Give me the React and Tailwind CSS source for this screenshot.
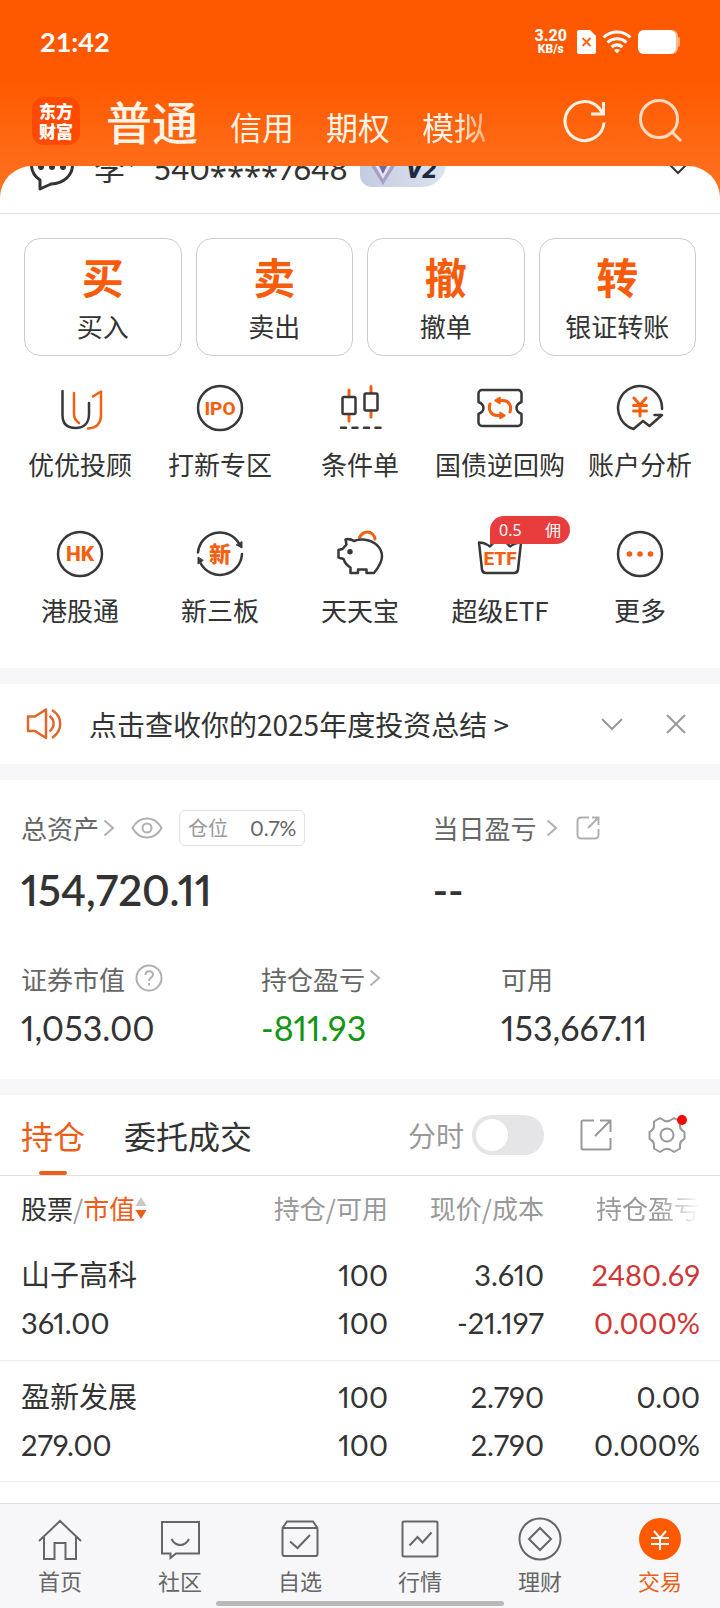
import React, { useState } from "react";

const tradeActions = [
  { glyph: "买", label: "买入" },
  { glyph: "卖", label: "卖出" },
  { glyph: "撤", label: "撤单" },
  { glyph: "转", label: "银证转账" },
];

const holdings = [
  {
    name: "山子高科",
    value: "361.00",
    total: "100",
    usable: "100",
    price: "3.610",
    cost: "-21.197",
    profit: "2480.69",
    rate: "0.000%",
    up: true,
  },
  {
    name: "盈新发展",
    value: "279.00",
    total: "100",
    usable: "100",
    price: "2.790",
    cost: "2.790",
    profit: "0.00",
    rate: "0.000%",
    up: false,
  },
];

const NUM = "font-['Lato','Noto_Sans_CJK_SC',sans-serif] proportional-nums";

function ServiceIcon({ children }) {
  return (
    <svg
      viewBox="0 0 48 48"
      className="size-12 fill-none stroke-[#383838] stroke-[2.5]"
      strokeLinecap="round"
      strokeLinejoin="round"
      aria-hidden="true"
    >
      {children}
    </svg>
  );
}

function IconWord({ size, y, children }) {
  return (
    <text
      x="24"
      y={y}
      fontSize={size}
      textAnchor="middle"
      stroke="none"
      className="fill-[#f55f10] font-['Roboto','Noto_Sans_CJK_SC',sans-serif] font-extrabold"
    >
      {children}
    </text>
  );
}

const services = [
  {
    label: "优优投顾",
    icon: (
      <ServiceIcon>
        <path d="M6.500 7v24c0 9 4.500 13 13 13s13.500-5 13.500-14V19" />
        <path d="M18 9v21c0 4 2 7 5 9M37 12.500l8-5v23c0 9-4 13.500-13 14" className="stroke-[#f55f10]" />
      </ServiceIcon>
    ),
  },
  {
    label: "打新专区",
    icon: (
      <ServiceIcon>
        <circle cx="24" cy="24" r="22" />
        <IconWord size={19} y={31}>IPO</IconWord>
      </ServiceIcon>
    ),
  },
  {
    label: "条件单",
    icon: (
      <ServiceIcon>
        <path d="M13 6v6M13 31v6M35 2.500v6M35 27v6" className="stroke-[#f55f10] stroke-[3]" />
        <rect x="6.500" y="13" width="13" height="17" rx="1.500" />
        <rect x="28.500" y="9.500" width="13" height="17" rx="1.500" />
        <path d="M5 43.700h5M16.500 43.700h5M28 43.700h5M39.500 43.700h5" />
      </ServiceIcon>
    ),
  },
  {
    label: "国债逆回购",
    icon: (
      <ServiceIcon>
        <path d="M6 6h36a3.500 3.500 0 0 1 3.500 3.500V18c-3.500 1.500-5 3.500-5 6s1.500 4.500 5 6v8.500A3.500 3.500 0 0 1 42 42H6a3.500 3.500 0 0 1-3.500-3.500V30c3.500-1.500 5-3.500 5-6s-1.500-4.500-5-6V9.500A3.500 3.500 0 0 1 6 6z" />
        <g className="stroke-[#f55f10] stroke-[3]">
          <path d="M34 28c2-6-1-11.500-7-11.500h-3M14 20c-2 6 1 11.500 7 11.500h3" />
          <path d="M24 13.500v6l-5-3zM24 28.500v6l5-3z" className="fill-[#f55f10] stroke-[1.5]" />
        </g>
      </ServiceIcon>
    ),
  },
  {
    label: "账户分析",
    icon: (
      <ServiceIcon>
        <path d="M46 25A22 22 0 1 0 17.500 45l9.500-8 6.500 5L46 31h-7.500" />
        <path d="M18 14l6 7 6-7M24 21v11M17.500 21.500h13M17.500 27h13" className="stroke-[#f55f10] stroke-[3]" />
      </ServiceIcon>
    ),
  },
  {
    label: "港股通",
    icon: (
      <ServiceIcon>
        <circle cx="24" cy="24" r="22" />
        <IconWord size={21} y={31}>HK</IconWord>
      </ServiceIcon>
    ),
  },
  {
    label: "新三板",
    icon: (
      <ServiceIcon>
        <path d="M2 22.500A22 22 0 0 1 43 13.500M46 24A22 22 0 0 1 4.500 33" />
        <path d="M46 12v6l-5.500-3zM2 27.500v6.500l5-3.500z" className="fill-[#383838] stroke-1" />
        <IconWord size={22} y={32}>新</IconWord>
      </ServiceIcon>
    ),
  },
  {
    label: "天天宝",
    icon: (
      <ServiceIcon>
        <path d="M23.500 7.500c2-4 4.500-5.500 8-5.500s7 3 7.500 7" className="stroke-[#f55f10] stroke-[3]" />
        <path d="M9.500 9.500c3-.8 6-.2 8.500 1.500 3-1.200 7-1.700 11-1.200C39 11 46 18 46 26.500c0 6-4 11.500-8 16.500h-7.500v-3.500H22V43h-7.500v-5.500C11.500 36 9 33 7.500 29L2.500 27.500v-7.500l4-1 4-4.500z" />
        <circle cx="14" cy="21.700" r="1.500" className="fill-[#383838]" />
      </ServiceIcon>
    ),
  },
  {
    label: "超级ETF",
    badge: ["0.5", "佣"],
    icon: (
      <ServiceIcon>
        <path d="M3 12.500c4 0 7 1 11 4L24 6l10 10.500c4-3 7-4 11-4l-3 27a4 4 0 0 1-4 3.500H10a4 4 0 0 1-4-3.500z" />
        <IconWord size={19} y={35}>ETF</IconWord>
      </ServiceIcon>
    ),
  },
  {
    label: "更多",
    icon: (
      <ServiceIcon>
        <circle cx="24" cy="24" r="22" />
        <g className="fill-[#f55f10] stroke-none">
          <circle cx="13.500" cy="24" r="2.800" />
          <circle cx="24" cy="24" r="2.800" />
          <circle cx="34.500" cy="24" r="2.800" />
        </g>
      </ServiceIcon>
    ),
  },
];

const tabs = [
  { label: "首页", icon: <path d="M1 24L22 4l21 20M6 20v22h10.500V26h11v16H38V20" /> },
  {
    label: "社区",
    icon: <path d="M4 5h37v31.500H18L12.500 41v-4.500H4zM13.500 22c4 8 13.500 8 17.500 0" />,
  },
  {
    label: "自选",
    icon: (
      <path d="M4.500 11l4.500-6.500h26l4.500 6.500v26a2 2 0 0 1-2 2h-31a2 2 0 0 1-2-2zM4.500 11h35M12 24.500l7.500 6.500L32 18" />
    ),
  },
  {
    label: "行情",
    icon: (
      <>
        <rect x="4.500" y="4.500" width="35" height="35" rx="1.500" />
        <path d="M11.500 28.500l8-8.500 5 5.500 9-10" />
      </>
    ),
  },
  {
    label: "理财",
    icon: (
      <>
        <circle cx="22" cy="22" r="20.500" />
        <path d="M22 11l11 11-11 11-11-11z" />
      </>
    ),
  },
  {
    label: "交易",
    active: true,
    icon: (
      <>
        <circle cx="22" cy="22" r="21" className="fill-[#ff5a00] stroke-none" />
        <path d="M16 14l6 7 6-7M22 21v12M13 21h18M13 27h18" className="stroke-white" />
      </>
    ),
  },
];

function ChevronRight() {
  return (
    <svg viewBox="0 0 12 18" className="h-[18px] w-3 fill-none stroke-[#b0b0b0] stroke-2" aria-hidden="true">
      <path d="M1.500 1.500L10 9l-8.500 7.500" />
    </svg>
  );
}

function StatusBar() {
  return (
    <div className="flex h-[84px] items-center justify-between px-10 text-white">
      <span className="font-['Lato',sans-serif] text-[27px] leading-8 font-bold">21:42</span>
      <div className="flex items-center gap-[6px]">
        <div className="mr-1 text-center font-['Roboto',sans-serif] font-extrabold">
          <div className="text-base leading-[15px]">3.20</div>
          <div className="text-xs leading-[13px]">KB/s</div>
        </div>
        <svg viewBox="0 0 19 24" className="h-6 w-[19px]" aria-hidden="true">
          <path d="M2 0h11l6 6v16a2 2 0 0 1-2 2H2a2 2 0 0 1-2-2V2a2 2 0 0 1 2-2z" fill="#fff" />
          <path d="M5.500 8l8 8M13.500 8l-8 8" stroke="#f26a1c" strokeWidth="2" />
        </svg>
        <svg viewBox="0 0 30 24" className="h-6 w-[30px] fill-none stroke-white stroke-[3]" aria-hidden="true">
          <path d="M1.500 7.500c8-7.300 19-7.300 27 0M5.500 12.500c5.500-5 13.500-5 19 0M9.500 17c3.500-2.700 7.500-2.700 11 0" />
          <path d="M12 20c2-1.300 4-1.300 6 0l-3 3.500z" className="fill-white stroke-none" />
        </svg>
        <svg viewBox="0 0 42 24" className="h-6 w-[42px]" aria-hidden="true">
          <path d="M38 7h2a2 2 0 0 1 2 2v6a2 2 0 0 1-2 2h-2z" fill="#ffa878" />
          <rect width="40" height="24" rx="6" fill="#ffb68c" />
          <rect width="38" height="24" rx="6" fill="#fff" />
        </svg>
      </div>
    </div>
  );
}

function AccountTabs() {
  return (
    <div className="flex h-[82px] items-center pr-[37px] pb-2 pl-8 text-[#fff3e6]">
      <div className="flex size-12 shrink-0 flex-col items-center justify-center rounded-xl bg-[#ff4a00] text-[17px] leading-5 font-black text-white">
        <span>东方</span>
        <span>财富</span>
      </div>
      <nav className="ml-[26px] flex flex-1 items-baseline gap-8">
        <button className="text-[46px] leading-[54px] font-[450]">普通</button>
        <button className="text-[32px]">信用</button>
        <button className="text-[32px]">期权</button>
        <button className="[mask-image:linear-gradient(to_right,black_50%,#0008)] text-[32px]">模拟</button>
      </nav>
      <div className="flex gap-[30px]">
        <button aria-label="刷新">
          <svg viewBox="0 0 46 46" className="size-[46px] fill-none stroke-current stroke-[3]">
            <path d="M43 24.500A19.500 19.500 0 1 1 38 10l4 6M30 16h12.500V4" />
          </svg>
        </button>
        <button aria-label="搜索">
          <svg viewBox="0 0 46 46" className="size-[46px] fill-none stroke-[#ffdcc0] stroke-[3]">
            <circle cx="22" cy="21" r="18.500" />
            <path d="M35 34l9 9" />
          </svg>
        </button>
      </div>
    </div>
  );
}

// Account row sits scrolled half way under the header
function AccountRow() {
  return (
    <div className="flex h-12 items-end overflow-hidden border-b border-[#e2e2e2]">
      <div className="flex h-[88px] w-full shrink-0 items-center pr-8 pl-[30px] text-[#333]">
        <svg viewBox="0 0 44 44" className="size-11 fill-none stroke-[#333] stroke-[3]" aria-hidden="true">
          <path d="M10 33C4 29 1.500 24 1.500 18 1.500 8 10 0 22 0s20.500 8 20.500 18S34 36.500 21 37l-11 5z" strokeLinejoin="round" />
          <g className="fill-[#333] stroke-none">
            <circle cx="11" cy="20" r="3" />
            <circle cx="22" cy="20" r="3" />
            <circle cx="33" cy="20" r="3" />
          </g>
        </svg>
        <span className={`ml-5 text-[31px] leading-[44px] whitespace-pre ${NUM}`}>
          李*{"  "}540<span className="align-sub font-['Noto_Sans',sans-serif] leading-none">****</span>7648
        </span>
        <span className="ml-3 flex h-9 w-[86px] items-center gap-2 rounded-tl-xl rounded-br-[24px] rounded-bl-xl bg-linear-to-r from-[#c3cbe0] to-[#dce3f0] pl-2">
          <svg viewBox="0 0 30 32" className="h-8 w-[30px]" aria-hidden="true">
            <path d="M0 8L8 0h14l8 8-15 24z" fill="#a79fc4" />
            <path d="M5 9h20L15 26z" fill="#e4e2f3" />
            <path d="M9 9h12l-6 12z" fill="#6f6c9c" />
          </svg>
          <span className="font-['Roboto',sans-serif] text-[26px] font-black text-[#1f2942] italic">V2</span>
        </span>
        <svg viewBox="0 0 20 12" className="ml-auto h-3 w-5 fill-none stroke-[#333] stroke-2" aria-hidden="true">
          <path d="M1 1l9 9 9-9" />
        </svg>
      </div>
    </div>
  );
}

function AssetSummary() {
  return (
    <section className="h-[299px] pt-7 text-[#666]">
      <div className="grid grid-cols-[4fr_3fr] *:pl-[21px]">
        <div>
          <div className="flex h-10 items-center text-[26px] leading-10">
            总资产
            <span className="ml-1">
              <ChevronRight />
            </span>
            <button className="ml-4" aria-label="隐藏金额">
              <svg viewBox="0 0 32 22" className="h-[22px] w-8 fill-none stroke-[#b0b0b0] stroke-2">
                <path d="M1.500 11C5 4.500 10 1.500 16 1.500S27 4.500 30.500 11C27 17.500 22 20.500 16 20.500S5 17.500 1.500 11z" />
                <circle cx="16" cy="11" r="4.500" />
              </svg>
            </button>
            <span className="ml-4 flex h-9 items-center gap-[22px] rounded-md border border-[#e2e2e2] px-2 text-xl text-[#999]">
              仓位 <span className={`text-[21px] text-[#666] ${NUM}`}>0.7%</span>
            </span>
          </div>
          <div className={`mt-4 text-[42px] leading-[52px] font-semibold text-[#333] ${NUM}`}>154,720.11</div>
        </div>
        <div>
          <div className="flex h-10 items-center text-[26px] leading-10">
            当日盈亏
            <span className="ml-[10px]">
              <ChevronRight />
            </span>
            <button className="ml-[18px]" aria-label="分享当日盈亏">
              <svg viewBox="0 0 24 24" className="size-6 fill-none stroke-[#b0b0b0] stroke-2">
                <path d="M13 1.500H5A3.500 3.500 0 0 0 1.500 5v14A3.500 3.500 0 0 0 5 22.500h14a3.500 3.500 0 0 0 3.500-3.500v-6M12 12L22.500 1.500M16 1.500h6.500V9" />
              </svg>
            </button>
          </div>
          <div className={`mt-4 text-[42px] leading-[52px] font-semibold text-[#333] ${NUM}`}>--</div>
        </div>
      </div>

      <div className="mt-[42px] grid grid-cols-3 *:pl-[21px]">
        <div>
          <div className="flex h-10 items-center gap-[10px] text-[26px]">
            证券市值
            <svg viewBox="0 0 28 28" className="size-7 fill-none stroke-[#b0b0b0] stroke-2" aria-hidden="true">
              <circle cx="14" cy="14" r="12.500" />
              <path d="M10.500 11c0-5 7.500-5 7.500-.5 0 3-4 3-4 6.500M14 19v2.500" />
            </svg>
          </div>
          <div className={`mt-[10px] text-[34px] leading-10 text-[#333] ${NUM}`}>1,053.00</div>
        </div>
        <div>
          <div className="flex h-10 items-center gap-1 text-[26px]">
            持仓盈亏
            <ChevronRight />
          </div>
          <div className={`mt-[10px] text-[34px] leading-10 text-[#149614] ${NUM}`}>-811.93</div>
        </div>
        <div>
          <div className="flex h-10 items-center text-[26px]">可用</div>
          <div className={`mt-[10px] text-[34px] leading-10 text-[#333] ${NUM}`}>153,667.11</div>
        </div>
      </div>
    </section>
  );
}

function Holdings() {
  const [intraday, setIntraday] = useState(false);

  return (
    <section>
      <div className="flex h-[81px] items-center border-b border-[#e0e0e0] pr-5 pl-[21px]">
        <button className="relative h-20 text-[32px] text-[#ea5e17] after:absolute after:bottom-0 after:left-1/2 after:h-1 after:w-7 after:-translate-x-1/2 after:rounded-full after:bg-[#ea5e17]">
          持仓
        </button>
        <button className="ml-[39px] h-20 text-[32px] text-[#333]">委托成交</button>
        <label className="ml-auto flex items-center gap-2 text-[28px] text-[#999]">
          分时
          <input
            type="checkbox"
            checked={intraday}
            onChange={(e) => setIntraday(e.target.checked)}
            className="flex h-10 w-[72px] appearance-none items-center rounded-full bg-[#e5e5e7] px-1 before:size-8 before:rounded-full before:bg-white checked:justify-end checked:bg-[#ea5e17]"
          />
        </label>
        <button className="ml-9" aria-label="分享持仓">
          <svg viewBox="0 0 32 32" className="size-8 fill-none stroke-[#999] stroke-2">
            <path d="M14 1.500H3A1.500 1.500 0 0 0 1.500 3v26A1.500 1.500 0 0 0 3 30.500h26a1.500 1.500 0 0 0 1.500-1.500V19M15 17L30 2M20 1.500h10.500V13" />
          </svg>
        </button>
        <button className="relative mr-[14px] ml-9" aria-label="持仓设置">
          <svg viewBox="0 0 38 38" className="size-[38px] fill-none stroke-[#999] stroke-2" strokeLinejoin="round">
            <path d="M12 2l4 2.500c2 1 4 1 6 0L26 2l6 3.500v4.500c0 2.500 1 4 3 5l1.500 1v6.500L35 24c-2 1-3 2.500-3 5v3.500L26 36l-4-2.500c-2-1-4-1-6 0L12 36l-6-3.500V29c0-2.500-1-4-3-5l-1.500-1.500V16L3 15c2-1 3-2.500 3-5V5.500z" />
            <circle cx="19" cy="19" r="6.500" />
          </svg>
          <span className="absolute -top-px -right-px size-[10px] rounded-full bg-[#fa0505]" />
        </button>
      </div>

      <table className="w-full table-fixed text-right text-[29px] leading-[48px] text-[#333]">
        <thead className="text-[26px] text-[#999]">
          <tr className="h-[63px] *:p-0 *:font-normal">
            <th>
              <button className="ml-[21px] flex items-center">
                <span className="text-[#333]">股票</span>/<span className="text-[#ea5e17]">市值</span>
                <svg viewBox="0 0 12 24" className="h-6 w-3" aria-hidden="true">
                  <path d="M6 1l5.500 9H.500z" fill="#c8c8c8" />
                  <path d="M6 23l5.500-9H.500z" fill="#ea5e17" />
                </svg>
              </button>
            </th>
            <th className="w-[156px]">持仓/可用</th>
            <th className="w-[156px]">现价/成本</th>
            <th className="w-44">
              <span className="mr-5 [mask-image:linear-gradient(to_right,black_60%,transparent)]">持仓盈亏</span>
            </th>
          </tr>
        </thead>
        <tbody className={NUM}>
          {holdings.map((h) => (
            <tr key={h.name} className="h-[121px] border-b border-[#ececec]">
              <td className="p-0 pl-[21px] text-left">
                <div>{h.name}</div>
                <div>{h.value}</div>
              </td>
              <td className="p-0">
                <div>{h.total}</div>
                <div>{h.usable}</div>
              </td>
              <td className="p-0">
                <div>{h.price}</div>
                <div>{h.cost}</div>
              </td>
              <td className={h.up ? "p-0 pr-5 text-[#cf3636]" : "p-0 pr-5"}>
                <div>{h.profit}</div>
                <div>{h.rate}</div>
              </td>
            </tr>
          ))}
        </tbody>
      </table>
    </section>
  );
}

function BottomNav() {
  return (
    <nav className="sticky bottom-0 grid h-[105px] grid-cols-6 border-t border-[#e0e0e0] bg-[#f7f7fa] pt-[13px]">
      {tabs.map((t) => (
        <a
          key={t.label}
          href="#"
          className={`flex flex-col items-center gap-[3px] text-[22px] leading-8 ${
            t.active ? "text-[#ea5e17]" : "text-[#666]"
          }`}
        >
          <svg viewBox="0 0 44 44" className="size-11 fill-none stroke-[#666] stroke-2" aria-hidden="true">
            {t.icon}
          </svg>
          {t.label}
        </a>
      ))}
      <span className="absolute bottom-[2px] left-1/2 h-[5px] w-2/5 -translate-x-1/2 rounded-full bg-[#b9b9b9]" />
    </nav>
  );
}

export default function App() {
  const [noticeOpen, setNoticeOpen] = useState(true);

  return (
    <div className="flex min-h-screen flex-col bg-[linear-gradient(#ff5900_80px,#ff701d_180px)] font-['Noto_Sans_CJK_SC',sans-serif]">
      <header>
        <StatusBar />
        <AccountTabs />
      </header>

      <main className="flex-1 overflow-hidden rounded-t-[32px] bg-white">
        <AccountRow />

        <section className="h-[454px] pt-6 text-[26px] leading-9 text-[#333]">
          <div className="grid grid-cols-4 gap-[14px] px-6">
            {tradeActions.map((a) => (
              <button
                key={a.label}
                className="flex h-[118px] flex-col items-center justify-center gap-1 rounded-2xl border border-[#ccc] pb-[3px]"
              >
                <span className="text-[42px] leading-[56px] font-bold text-[#f85c0a]">{a.glyph}</span>
                <span>{a.label}</span>
              </button>
            ))}
          </div>

          <div className="mt-7 grid grid-cols-5 gap-y-12 px-[10px]">
            {services.map((s) => (
              <button key={s.label} className="relative flex flex-col items-center gap-[14px] whitespace-nowrap">
                {s.icon}
                <span>{s.label}</span>
                {s.badge && (
                  <span className="absolute -top-[14px] left-[60px] flex h-7 w-20 items-center justify-between rounded-full rounded-bl-none bg-[#e83c3d] px-[9px] font-['Noto_Sans','Noto_Sans_CJK_SC',sans-serif] text-base text-white">
                    <span>{s.badge[0]}</span>
                    <span>{s.badge[1]}</span>
                  </span>
                )}
              </button>
            ))}
          </div>
        </section>

        {noticeOpen && (
          <div className="flex h-24 items-center border-t-16 border-[#f7f7fa] pr-8 pl-[26px]">
            <svg
              viewBox="0 0 36 36"
              className="size-9 shrink-0 fill-none stroke-[#e0662a] stroke-[2.5]"
              strokeLinejoin="round"
              aria-hidden="true"
            >
              <path d="M2 10.500h7L20 3.500v28.500l-11-7H2zM23.500 10c5.500 4 5.500 11 0 15.500M26 4c11 7 11 20.500 0 28" />
            </svg>
            <a href="#" className="ml-[27px] flex-1 text-[28px] text-[#333]">
              点击查收你的2025年度投资总结 &gt;
            </a>
            <button aria-label="展开">
              <svg viewBox="0 0 24 24" className="size-6 fill-none stroke-[#999] stroke-2">
                <path d="M2 7l10 10L22 7" />
              </svg>
            </button>
            <button className="ml-10" aria-label="关闭" onClick={() => setNoticeOpen(false)}>
              <svg viewBox="0 0 24 24" className="size-6 fill-none stroke-[#999] stroke-2">
                <path d="M3 3l18 18M21 3L3 21" />
              </svg>
            </button>
          </div>
        )}

        <div className="border-y-16 border-[#f7f7fa]">
          <AssetSummary />
        </div>

        <Holdings />
      </main>

      <BottomNav />
    </div>
  );
}
